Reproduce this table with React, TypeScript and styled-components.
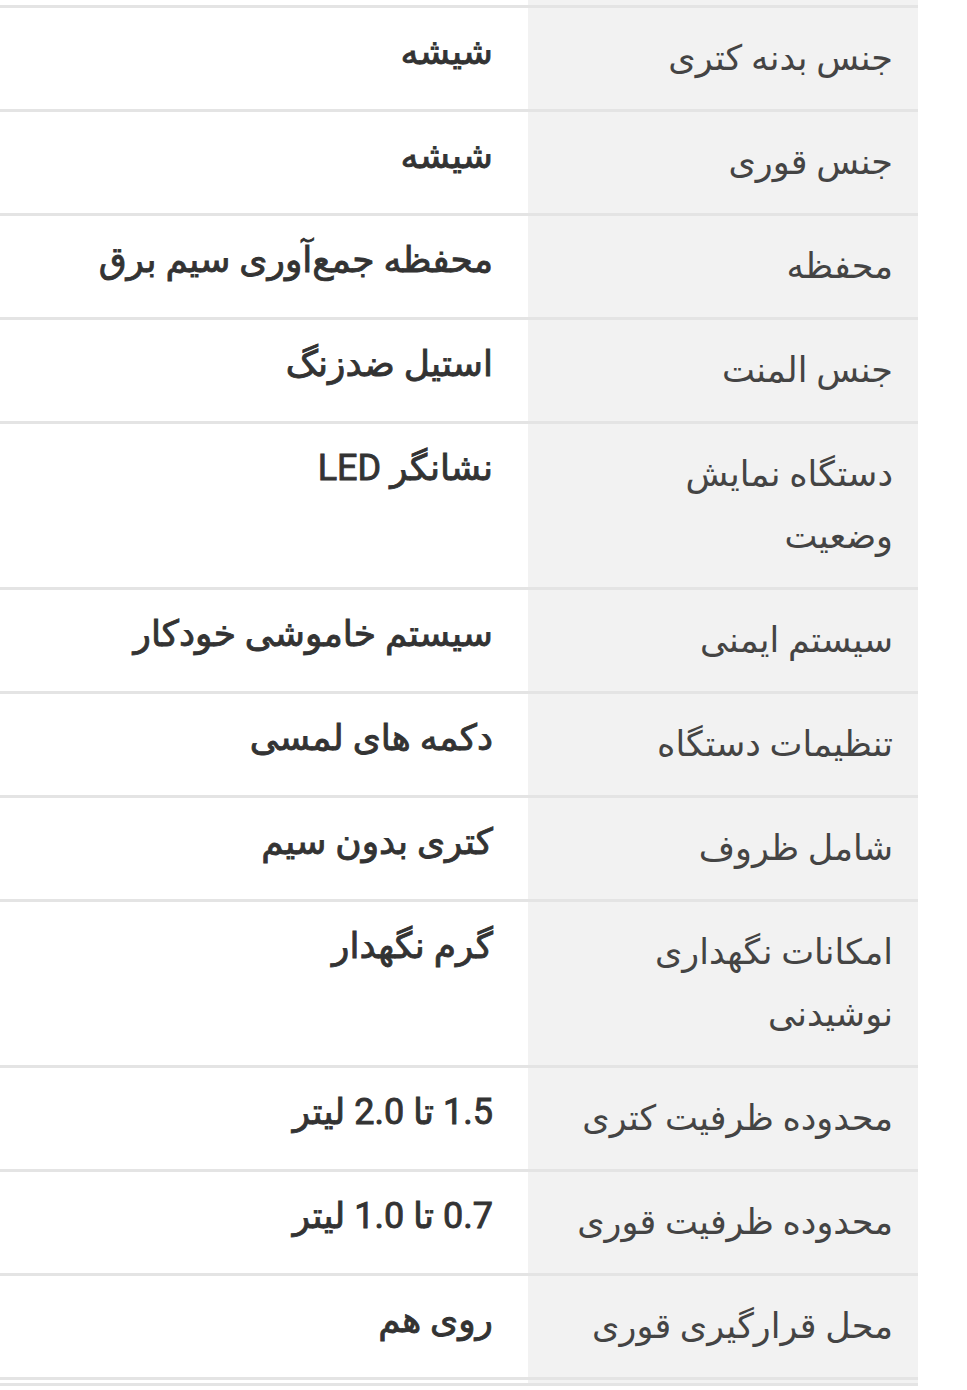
import React from "react";
import styled, { createGlobalStyle } from "styled-components";

const Global = createGlobalStyle`
  html, body { margin: 0; padding: 0; background: #ffffff; }
  body { font-family: Roboto, "DejaVu Sans", sans-serif; }
`;

const Page = styled.div`
  width: 967px;
  height: 1390px;
  overflow: hidden;
  background: #ffffff;
`;

const Table = styled.table`
  width: 918px;
  border-collapse: collapse;
  direction: rtl;
  table-layout: fixed;
`;

const Row = styled.tr`
  border-bottom: 3px solid #e4e4e4;
`;

const LabelCell = styled.td<{ $stub?: boolean }>`
  width: 390px;
  background: #f2f2f2;
  color: #444444;
  font-size: 35px;
  font-weight: 400;
  line-height: 62px;
  padding: ${(p) => (p.$stub ? "0" : "20px 25px 19px 49px")};
  height: ${(p) => (p.$stub ? "6px" : "auto")};
  vertical-align: top;
  text-align: right;
  box-sizing: border-box;
`;

const ValueCell = styled.td<{ $stub?: boolean }>`
  background: #ffffff;
  color: #333333;
  font-size: 36px;
  font-weight: 400;
  -webkit-text-stroke: 0.9px #333333;
  line-height: 62px;
  padding: ${(p) => (p.$stub ? "0" : "13px 35px 26px 10px")};
  height: ${(p) => (p.$stub ? "6px" : "auto")};
  vertical-align: top;
  text-align: right;
  box-sizing: border-box;
`;

const rows: [string, string][] = [
  ["جنس بدنه کتری", "شیشه"],
  ["جنس قوری", "شیشه"],
  ["محفظه", "محفظه جمع‌آوری سیم برق"],
  ["جنس المنت", "استیل ضدزنگ"],
  ["دستگاه نمایش وضعیت", "نشانگر LED"],
  ["سیستم ایمنی", "سیستم خاموشی خودکار"],
  ["تنظیمات دستگاه", "دکمه های لمسی"],
  ["شامل ظروف", "کتری بدون سیم"],
  ["امکانات نگهداری نوشیدنی", "گرم نگهدار"],
  ["محدوده ظرفیت کتری", "1.5 تا 2.0 لیتر"],
  ["محدوده ظرفیت قوری", "0.7 تا 1.0 لیتر"],
  ["محل قرارگیری قوری", "روی هم"],
];

export default function App() {
  return (
    <Page>
      <Global />
      <Table>
        <tbody>
          <Row>
            <LabelCell $stub />
            <ValueCell $stub />
          </Row>
          {rows.map(([label, value]) => (
            <Row key={label}>
              <LabelCell>{label}</LabelCell>
              <ValueCell>{value}</ValueCell>
            </Row>
          ))}
          <Row>
            <LabelCell $stub />
            <ValueCell $stub />
          </Row>
        </tbody>
      </Table>
    </Page>
  );
}
